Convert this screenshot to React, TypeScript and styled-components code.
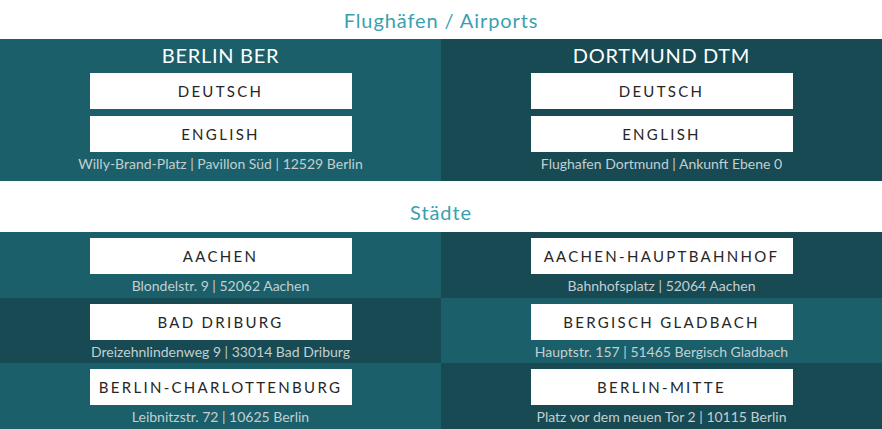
import React from 'react';
import styled, { createGlobalStyle } from 'styled-components';

const GlobalStyle = createGlobalStyle`
  body {
    margin: 0;
    background: #ffffff;
    font-family: Lato, 'Open Sans', sans-serif;
  }
`;

interface Airport {
  name: string;
  address: string;
}

interface City {
  name: string;
  address: string;
}

const airports: Airport[] = [
  { name: 'BERLIN BER', address: 'Willy-Brand-Platz | Pavillon Süd | 12529 Berlin' },
  { name: 'DORTMUND DTM', address: 'Flughafen Dortmund | Ankunft Ebene 0' },
];

const cities: City[] = [
  { name: 'AACHEN', address: 'Blondelstr. 9 | 52062 Aachen' },
  { name: 'AACHEN-HAUPTBAHNHOF', address: 'Bahnhofsplatz | 52064 Aachen' },
  { name: 'BAD DRIBURG', address: 'Dreizehnlindenweg 9 | 33014 Bad Driburg' },
  { name: 'BERGISCH GLADBACH', address: 'Hauptstr. 157 | 51465 Bergisch Gladbach' },
  { name: 'BERLIN-CHARLOTTENBURG', address: 'Leibnitzstr. 72 | 10625 Berlin' },
  { name: 'BERLIN-MITTE', address: 'Platz vor dem neuen Tor 2 | 10115 Berlin' },
];

function App() {
  return (
    <>
      <GlobalStyle />
      <Page>
        <SectionTitle $height={39}>Flughäfen / Airports</SectionTitle>
        <Grid>
          {airports.map((a, i) => (
            <AirportCell key={a.name} $dark={i % 2 === 1}>
              <AirportName>{a.name}</AirportName>
              <Button>DEUTSCH</Button>
              <Button>ENGLISH</Button>
              <Address>{a.address}</Address>
            </AirportCell>
          ))}
        </Grid>
        <SectionTitle $height={51} $pad={10}>Städte</SectionTitle>
        <Grid>
          {cities.map((c, i) => {
            const row = Math.floor(i / 2);
            const dark = (row + i) % 2 === 1;
            return (
              <CityCell key={c.name} $dark={dark}>
                <Button>{c.name}</Button>
                <CityAddress>{c.address}</CityAddress>
              </CityCell>
            );
          })}
        </Grid>
      </Page>
    </>
  );
}

export default App;

const Page = styled.div`
  width: 882px;
  display: flex;
  flex-direction: column;
`;

const SectionTitle = styled.div<{ $height: number; $pad?: number }>`
  height: ${(p) => p.$height}px;
  box-sizing: border-box;
  padding-top: ${(p) => p.$pad ?? 0}px;
  display: flex;
  align-items: center;
  justify-content: center;
  color: #3a9fb1;
  font-size: 20px;
  letter-spacing: 0.9px;
`;

const Grid = styled.div`
  display: grid;
  grid-template-columns: 441px 441px;
`;

const AirportCell = styled.div<{ $dark: boolean }>`
  background: ${(p) => (p.$dark ? '#174a53' : '#1a5f6a')};
  display: flex;
  flex-direction: column;
  align-items: center;
  padding: 5px 0 7px;
  gap: 7px;
`;

const AirportName = styled.div`
  color: #ffffff;
  font-size: 20px;
  line-height: 23px;
  letter-spacing: 0.7px;
  margin-bottom: -1px;
`;

const Button = styled.div`
  width: 262px;
  height: 36px;
  background: #ffffff;
  color: #262626;
  display: flex;
  align-items: center;
  justify-content: center;
  font-size: 15px;
  letter-spacing: 2.3px;
  white-space: nowrap;
`;

const Address = styled.div`
  color: #c3cfd0;
  font-size: 14px;
  line-height: 20px;
  margin-top: -5px;
`;

const CityCell = styled.div<{ $dark: boolean }>`
  background: ${(p) => (p.$dark ? '#174a53' : '#1a5f6a')};
  height: 65.5px;
  box-sizing: border-box;
  display: flex;
  flex-direction: column;
  align-items: center;
  padding-top: 6px;
`;

const CityAddress = styled.div`
  color: #c3cfd0;
  font-size: 14px;
  line-height: 20px;
  margin-top: 2px;
`;
